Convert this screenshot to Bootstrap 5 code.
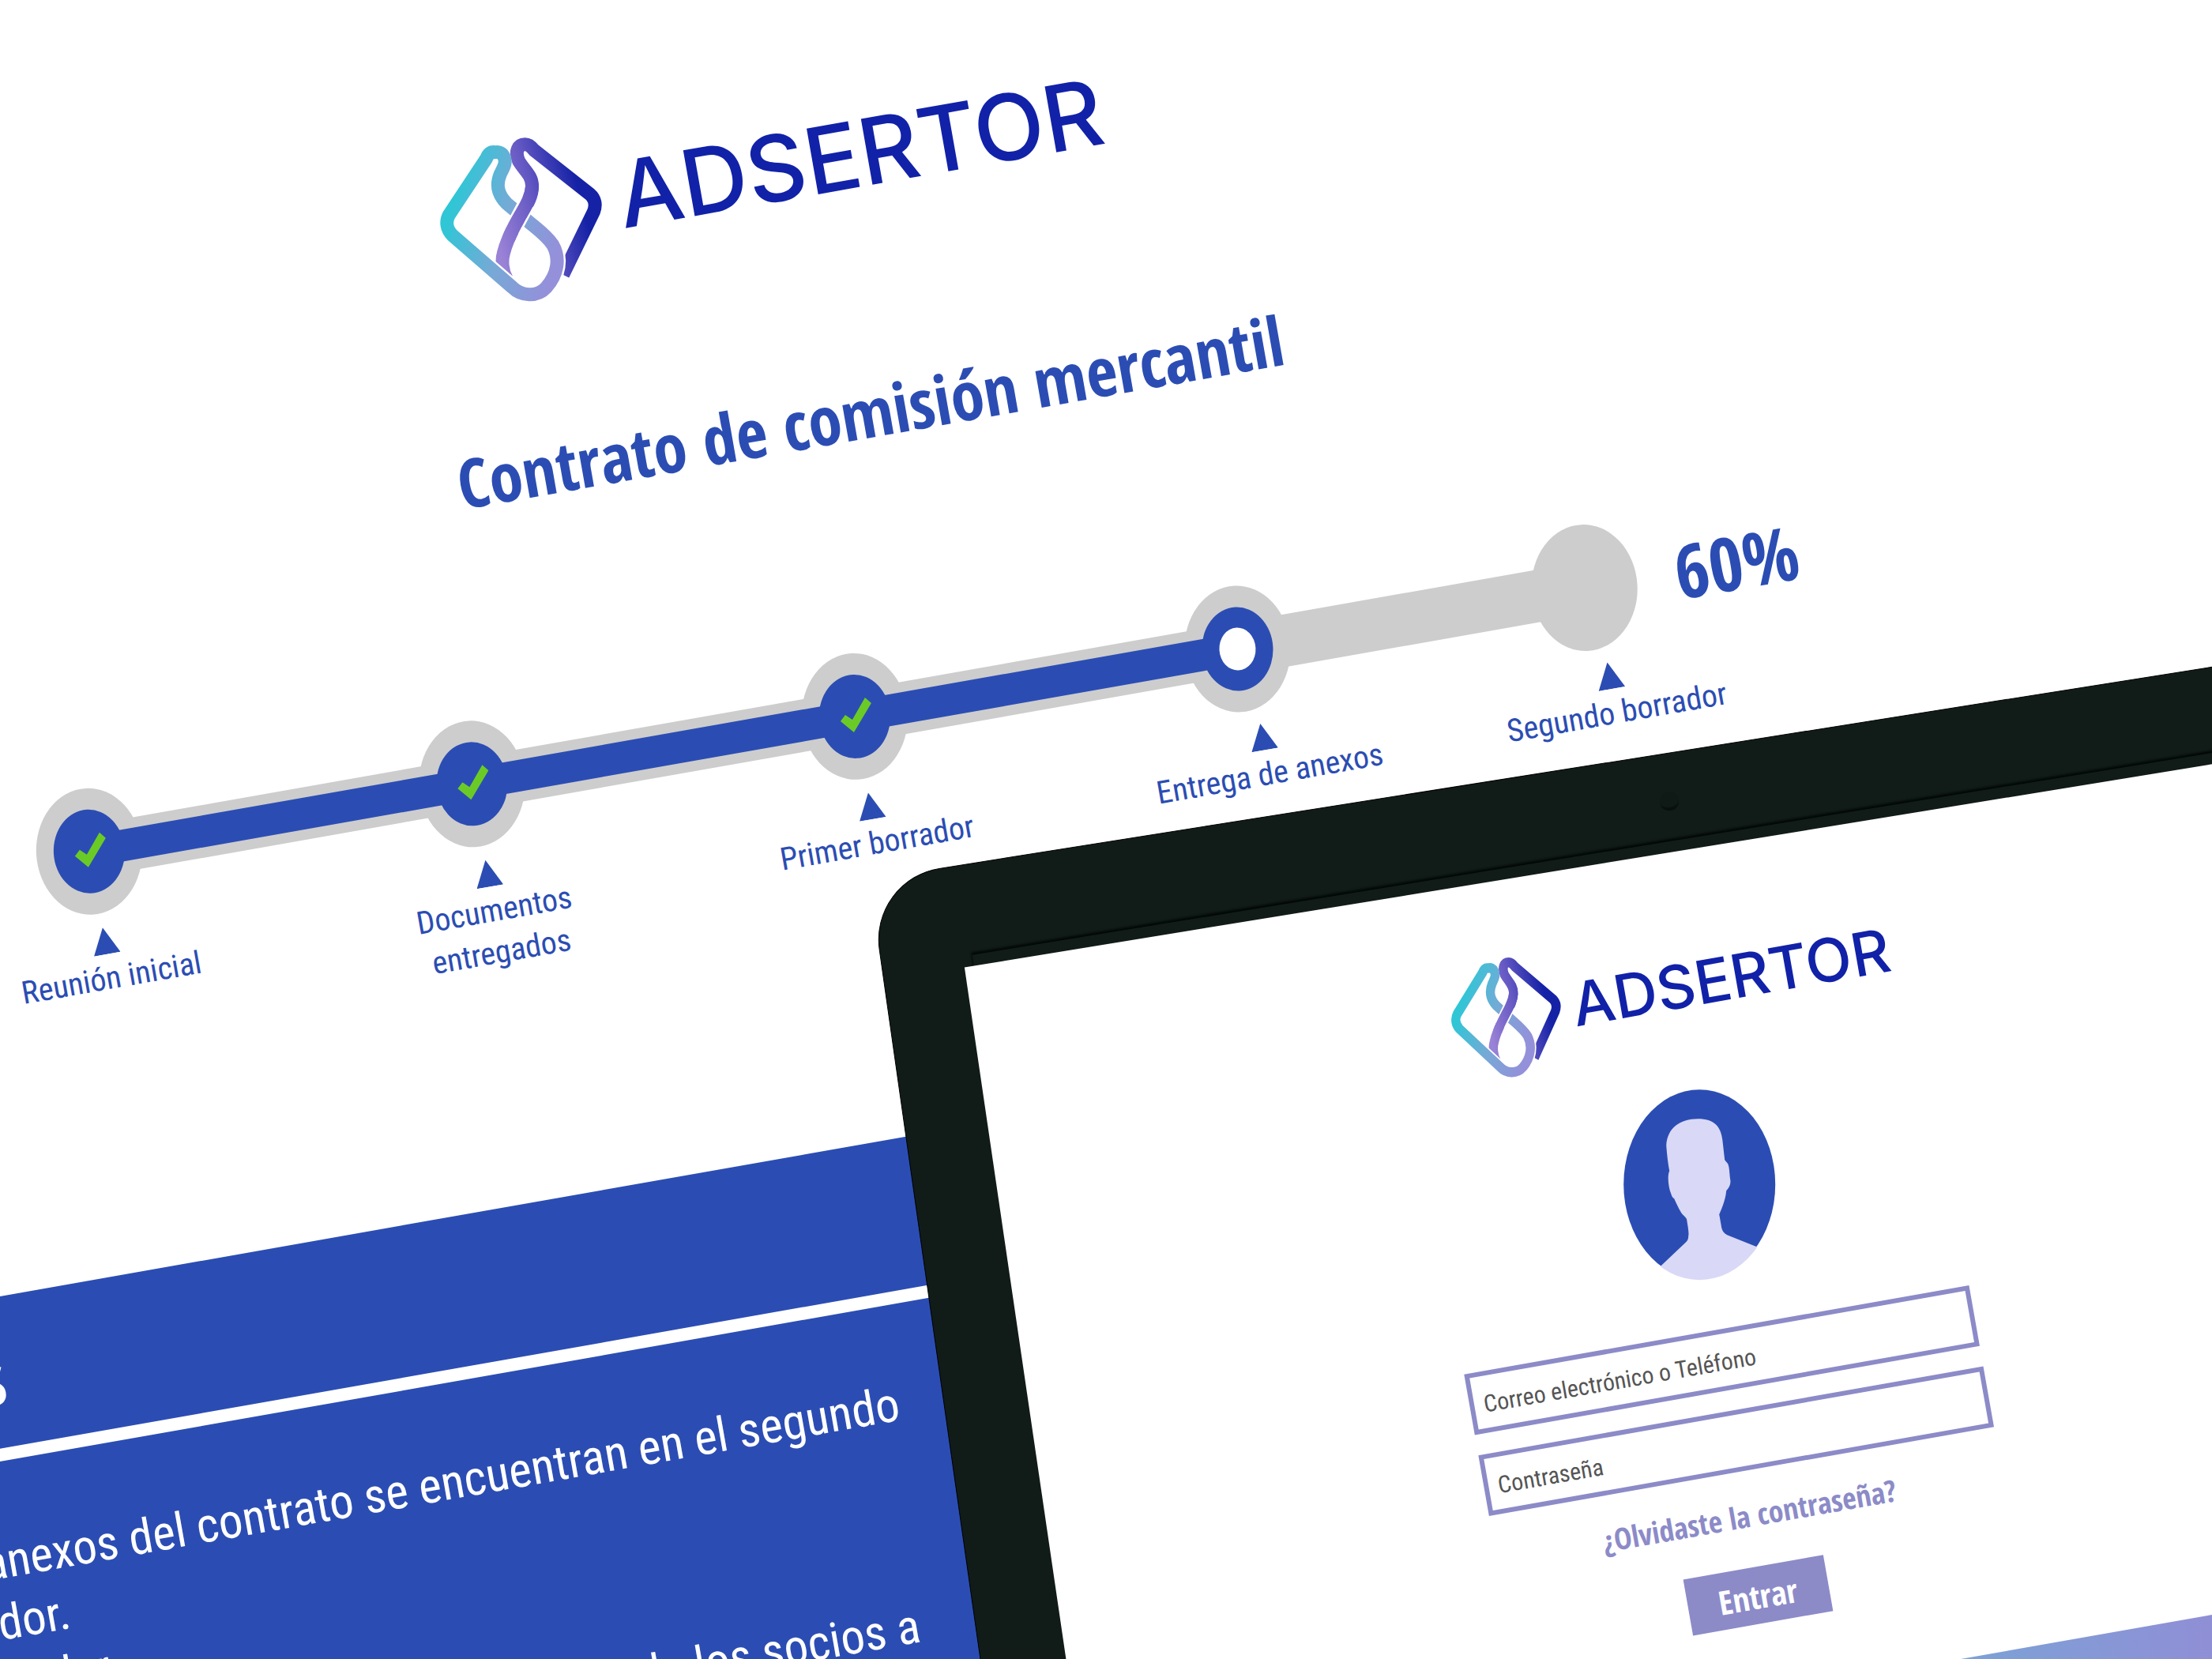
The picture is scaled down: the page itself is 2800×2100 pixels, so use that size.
<!DOCTYPE html>
<html lang="es">
<head>
<meta charset="utf-8">
<meta name="viewport" content="width=device-width, initial-scale=1">
<title>Adsertor – Contrato de comisión mercantil</title>
<link href="https://cdn.jsdelivr.net/npm/bootstrap@5.3.0/dist/css/bootstrap.min.css" rel="stylesheet">
<script src="https://cdn.jsdelivr.net/npm/bootstrap@5.3.0/dist/js/bootstrap.bundle.min.js"></script>
<style>
  :root { --azul: #2b4db3; --marino: #1122a8; --lila: #8c8bc8; --gris: #cdcdcd; --marco: #111c18; }
  body { background: #fff; font-family: "Roboto Condensed", Roboto, sans-serif; color: var(--azul); }
  .scene { height: 100vh; }
  .fw-bold, .btn { font-family: "Open Sans Condensed", "Open Sans", sans-serif; }

  /* tilted web page at the back */
  .sheet { position: absolute; top: 0; left: 0; width: 100%; transform-origin: 0 0; transform: rotate(-10deg) translateX(-560px); padding-top: 280px; }
  .brand { padding-left: 1051px; gap: 16px; }
  .mark-main { width: 220px; height: 220px; transform: rotate(10deg); }
  .wordmark { font-family: Inter, sans-serif; font-weight: 500; color: var(--marino); line-height: 1; }
  .wordmark-main { padding-bottom: 20px; font-size: 116px; }
  .doc-title { margin: 164px 0 0 1024px; font-size: 86px; line-height: 80px; white-space: nowrap; }

  .steps { margin: 257px 0 0 238px; }
  .step-item { position: relative; flex: 0 0 492px; text-align: center; }
  .step-item:last-child { flex-basis: 400px; }
  .step-item::before, .step-item::after { content: ""; position: absolute; left: 50%; width: 100%; }
  .step-item::before { top: 47px; height: 66px; background: var(--gris); z-index: 1; }
  .step-item::after { top: 60px; height: 40px; background: var(--azul); z-index: 2; }
  .step-item:last-child::before, .step-item:last-child::after, .step-now::after { display: none; }
  .node { display: grid; place-items: center; }
  .node > * { grid-area: 1 / 1; }
  .halo { width: 134px; height: 160px; border-radius: 50%; background: var(--gris); transform: rotate(7deg); }
  .core { z-index: 3; width: 90px; height: 106px; border-radius: 50%; background: var(--azul); transform: rotate(7deg); }
  .hole { width: 46px; height: 54px; border-radius: 50%; background: #fff; }
  .pointer { display: block; width: 34px; height: 34px; margin: 18px auto 4px; }
  .step-label { font-size: 40px; line-height: 53px; white-space: nowrap; }
  .step-far .pointer { margin-left: calc(50% - 5px); }
  .step-far .step-label { padding-left: 26px; }
  .percent { height: 160px; margin: 257px 0 0 -84px; font-size: 94px; }

  .notes { margin-top: 293px; color: #fff; }
  .notes-head { height: 190px; padding: 50px 0 0 58px; font-size: 90px; line-height: 100px; background: var(--azul); }
  .notes-body { min-height: 700px; margin-top: 16px; padding: 87px 0 0 75px; font-size: 61px; line-height: 77px; white-space: nowrap; background: var(--azul); }
  .notes-line { width: 1297px; }
  .notes-next { width: 1274px; margin-top: 50px; }

  /* laptop in front */
  .device { position: absolute; top: 53%; left: 39.3%; width: 100%; }
  .bezel { position: absolute; top: 0; left: 0; width: 100%; height: 1700px; padding: 128px 0 0 103px; border: 1px solid #000; border-radius: 90px 0 0 0; background: var(--marco); transform-origin: 0 0; transform: rotate(-9deg) skewX(-.9deg); }
  .glass { height: 100%; background: #fff; transform-origin: 0 0; transform: rotate(-.25deg); box-shadow: 8px -18px 0 -4px var(--marco), 8px -20px 3px -3px #030806; }
  .camera { position: absolute; top: 48px; left: 1004px; width: 24px; height: 24px; border-radius: 50%; background: #0f1915; border-bottom: 4px solid #080f0c; }
  .screen { position: absolute; top: 0; left: 633px; width: 649px; transform-origin: -633px 0; transform: rotate(-10deg); padding-top: 233px; }
  .brand-small { gap: 11px; padding-left: 56px; }
  .mark-small { width: 149px; height: 161px; flex: none; transform: rotate(10deg); }
  .wordmark-small { padding-bottom: 6px; font-size: 76px; }
  .avatar { width: 204px; height: 248px; margin: 46px 0 0 22px; transform: rotate(10deg); }
  .field { height: 78px; border: 6px solid var(--lila); border-radius: 0; padding: 4px 12px 0; font-size: 30px; color: #555; background: #fff; }
  .field::placeholder { color: #555; opacity: 1; }
  .fields { margin-top: 60px; gap: 26px; }
  .forgot { margin-top: 34px; font-size: 38px; line-height: 44px; color: var(--lila); }
  .enter { width: 180px; height: 72px; margin: 44px 14px 0 0; padding: 0; border: 0; border-radius: 0; font-size: 42px; font-weight: 700; color: #fff; background: var(--lila); }
  .screen-foot { position: absolute; top: 1212px; left: -633px; width: 100vw; height: 400px; background: linear-gradient(90deg, #33c4d6 0, #7ba3d6 1180px, #8f8fd6 1500px); }
</style>
</head>
<body>
<svg width="0" height="0" class="position-absolute" aria-hidden="true">
  <defs>
    <linearGradient id="gTeal" gradientUnits="userSpaceOnUse" x1="16" y1="110" x2="156" y2="150">
      <stop offset="0" stop-color="#2fc6d6"/><stop offset=".5" stop-color="#77a9d6"/><stop offset="1" stop-color="#9490da"/>
    </linearGradient>
    <linearGradient id="gViolet" gradientUnits="userSpaceOnUse" x1="84" y1="150" x2="196" y2="120">
      <stop offset="0" stop-color="#9a82d6"/><stop offset=".5" stop-color="#6357c2"/><stop offset="1" stop-color="#1522a6"/>
    </linearGradient>
    <symbol id="mark" viewBox="0 0 220 220" preserveAspectRatio="none">
      <g fill="none" stroke-width="17" stroke-linejoin="round">
        <path stroke="url(#gViolet)" d="M92 184C86 174 85 160 88 150C92 134 98 124 104 112C114 94 124 82 124 66C124 52 114 46 107 34C102 22 106 13 115 13C120 13 123 16 126 20L197 76C204 82 205 90 202 98L163 178"/>
        <path stroke="#fff" stroke-width="22" d="M24 129L99 194C110 205 130 207 142 194C156 178 160 158 150 140"/>
        <path stroke="url(#gTeal)" d="M77 23C71 22 68 26 66 31L19 102C14 111 16 121 23 128L99 194C110 205 130 207 142 194C156 178 160 158 150 140C142 128 130 120 116 108L92 88C80 76 78 64 84 50C88 42 92 36 88 28C86 24 82 22 77 23Z"/>
        <path stroke="#fff" stroke-width="22" d="M99 122L117 88"/>
        <path stroke="url(#gViolet)" d="M94 133C98 122 104 112 109 103C116 91 123 80 124 66"/>
      </g>
    </symbol>
    <symbol id="tick" viewBox="-22 -26 44 52">
      <path fill="#6bcb26" transform="rotate(3)" d="M13-24L21-17L-1 20L-18 6L-12-2L-3 4Z"/>
    </symbol>
    <symbol id="tri" viewBox="0 0 34 34"><path fill="#2b4db3" d="M17 0L34 34H0Z"/></symbol>
  </defs>
</svg>

<main class="scene position-relative overflow-hidden">
  <section class="sheet">
    <header class="brand d-flex align-items-center">
      <svg class="mark-main" aria-hidden="true"><use href="#mark"/></svg>
      <span class="wordmark wordmark-main">ADSERTOR</span>
    </header>
    <h1 class="doc-title fw-bold">Contrato de comisión mercantil</h1>

    <div class="d-flex">
      <ol class="steps list-unstyled d-flex flex-shrink-0">
        <li class="step-item">
          <div class="node"><span class="halo"></span><span class="core d-flex align-items-center justify-content-center"><svg width="44" height="52"><use href="#tick"/></svg></span></div>
          <svg class="pointer"><use href="#tri"/></svg>
          <div class="step-label">Reunión inicial</div>
        </li>
        <li class="step-item">
          <div class="node"><span class="halo"></span><span class="core d-flex align-items-center justify-content-center"><svg width="44" height="52"><use href="#tick"/></svg></span></div>
          <svg class="pointer"><use href="#tri"/></svg>
          <div class="step-label">Documentos<br>entregados</div>
        </li>
        <li class="step-item">
          <div class="node"><span class="halo"></span><span class="core d-flex align-items-center justify-content-center"><svg width="44" height="52"><use href="#tick"/></svg></span></div>
          <svg class="pointer"><use href="#tri"/></svg>
          <div class="step-label">Primer borrador</div>
        </li>
        <li class="step-item step-now step-far">
          <div class="node"><span class="halo"></span><span class="core d-flex align-items-center justify-content-center"><span class="hole"></span></span></div>
          <svg class="pointer"><use href="#tri"/></svg>
          <div class="step-label">Entrega de anexos</div>
        </li>
        <li class="step-item step-far">
          <div class="node"><span class="halo"></span></div>
          <svg class="pointer"><use href="#tri"/></svg>
          <div class="step-label">Segundo borrador</div>
        </li>
      </ol>
      <div class="percent fw-bold d-flex align-items-center">60%</div>
    </div>

    <section class="notes">
      <h2 class="notes-head fw-bold m-0">Notas</h2>
      <div class="notes-body">
        <div class="notes-line text-end">Los anexos del contrato se encuentran en el segundo</div>
        <div>borrador.</div>
        <div>Responder</div>
        <div class="notes-next text-end">Confirmar los datos de los socios a</div>
      </div>
    </section>
  </section>

  <section class="device">
    <div class="bezel">
      <span class="camera"></span>
      <div class="glass"></div>
    </div>
    <form class="screen d-flex flex-column align-items-center">
      <div class="brand-small d-flex align-items-center align-self-start">
        <svg class="mark-small" aria-hidden="true"><use href="#mark"/></svg>
        <span class="wordmark wordmark-small">ADSERTOR</span>
      </div>
      <svg class="avatar" viewBox="0 0 204 248" role="img" aria-label="Usuario">
        <defs><clipPath id="disc"><ellipse cx="101" cy="123" rx="97" ry="121"/></clipPath></defs>
        <ellipse cx="101" cy="123" rx="96" ry="120" fill="#2b4db3"/>
        <path clip-path="url(#disc)" fill="#d9d8f7" d="M99 40C76 40 60 52 59 74C60 86 61 96 63 106C60 112 62 126 64 132C66 138 67 140 69 141C72 148 75 154 78 159C81 163 85 165 85 168C86 175 88 184 87 188C87 192 86 194 84 196L46 232V250H190V210L176 203L136 187C132 185 130 182 129 178C128 172 127 166 126 161C130 152 134 142 135 131C139 127 141 122 140 117C139 110 139 101 137 97C136 95 134 94 133 92C132 84 131 74 130 66C128 50 120 40 99 40Z"/>
      </svg>
      <div class="fields d-flex flex-column w-100">
        <input class="field form-control" type="text" placeholder="Correo electrónico o Teléfono" aria-label="Correo electrónico o Teléfono">
        <input class="field form-control" type="password" placeholder="Contraseña" aria-label="Contraseña">
      </div>
      <a class="forgot fw-bold text-decoration-none" href="#">¿Olvidaste la contraseña?</a>
      <button class="enter btn" type="button">Entrar</button>
      <div class="screen-foot"></div>
    </form>
  </section>
</main>
</body>
</html>
